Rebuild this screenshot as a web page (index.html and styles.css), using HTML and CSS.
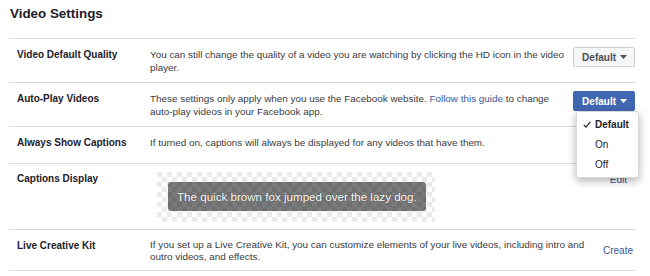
FILE: index.html
```html
<!DOCTYPE html>
<html lang="en">
<head>
    <meta charset="UTF-8">
    <meta name="viewport" content="width=device-width, initial-scale=1.0">
    <title>Video Settings</title>
    <link rel="stylesheet" href="styles.css">
</head>
<body>
    <div class="page">
        <h2 class="title">Video Settings</h2>

        <div class="settings">
            <div class="row">
                <div class="label">Video Default Quality</div>
                <div class="desc">You can still change the quality of a video you are watching by clicking the HD icon in the video player.</div>
                <div class="control">
                    <button class="btn">Default <svg class="caret" width="7" height="4" viewBox="0 0 7 4"><path d="M0 0h7L3.5 4z" fill="currentColor"/></svg></button>
                </div>
            </div>

            <div class="row">
                <div class="label">Auto-Play Videos</div>
                <div class="desc">These settings only apply when you use the Facebook website. <a href="#">Follow this guide</a> to change auto-play videos in your Facebook app.</div>
                <div class="control menu-anchor">
                    <button class="btn btn-primary">Default <svg class="caret" width="7" height="4" viewBox="0 0 7 4"><path d="M0 0h7L3.5 4z" fill="currentColor"/></svg></button>
                    <ul class="menu">
                        <li class="menu-item selected">
                            <span class="check"><svg width="8" height="7" viewBox="0 0 8 7"><path d="M0.8 3.8L3 6.1L7.2 0.8" fill="none" stroke="#1d2129" stroke-width="1.2"/></svg></span>Default
                        </li>
                        <li class="menu-item"><span class="check"></span>On</li>
                        <li class="menu-item"><span class="check"></span>Off</li>
                    </ul>
                </div>
            </div>

            <div class="row">
                <div class="label">Always Show Captions</div>
                <div class="desc">If turned on, captions will always be displayed for any videos that have them.</div>
                <div class="control"></div>
            </div>

            <div class="row row-preview">
                <div class="label">Captions Display</div>
                <div class="desc">
                    <div class="checker">
                        <span class="caption">The quick brown fox jumped over the lazy dog.</span>
                    </div>
                </div>
                <div class="control"><a href="#" class="edit">Edit</a></div>
            </div>

            <div class="row row-last">
                <div class="label">Live Creative Kit</div>
                <div class="desc desc-tight">If you set up a Live Creative Kit, you can customize elements of your live videos, including intro and outro videos, and effects.</div>
                <div class="control control-middle"><a href="#">Create</a></div>
            </div>
        </div>
    </div>
</body>
</html>
```

FILE: styles.css
```css
body {
    margin: 0;
    background-color: #ffffff;
    font-family: "Liberation Sans", Arial, sans-serif;
    color: #1d2129;
}
.page {
    padding: 6px 14px 0 9px;
}
.title {
    margin: 0 0 16px 1px;
    font-size: 13.4px;
    line-height: 16px;
    font-weight: bold;
    color: #1d2129;
}
a {
    color: #365899;
    text-decoration: none;
}
.row {
    display: grid;
    grid-template-columns: 129px 1fr auto;
    column-gap: 4px;
    padding: 9px 1px 8px 8px;
    min-height: 19px;
    border-top: 1px solid #dadde1;
    font-size: 10px;
    line-height: 13px;
}
.row-preview {
    padding-top: 8px;
    padding-bottom: 7px;
}
.row-preview .edit {
    margin-top: 1px;
}
.row-last {
    border-bottom: 1px solid #dadde1;
}
.label {
    font-weight: bold;
    color: #1d2129;
}
.desc {
    color: #383b41;
    font-size: 9.9px;
}
.desc-tight {
    line-height: 11.5px;
}
.control {
    display: flex;
    justify-content: flex-end;
    align-items: flex-start;
}
.control-middle {
    align-self: center;
    padding-right: 2px;
}
.menu-anchor {
    position: relative;
}
.btn {
    display: flex;
    align-items: center;
    gap: 4px;
    height: 20px;
    margin-top: -1px;
    padding: 0 7px 0 8px;
    border: 1px solid #ccd0d5;
    border-radius: 2px;
    background-color: #f5f6f7;
    color: #4b4f56;
    font-family: inherit;
    font-size: 10px;
    font-weight: bold;
    cursor: pointer;
}
.btn-primary {
    background-color: #4267b2;
    border-color: #4267b2;
    color: #ffffff;
}
.caret {
    display: block;
}
.menu {
    position: absolute;
    top: 19px;
    right: -4px;
    width: 61px;
    margin: 0;
    padding: 2px 0 3px;
    list-style: none;
    background-color: #ffffff;
    border: 1px solid rgba(0, 0, 0, 0.15);
    border-radius: 3px;
    box-shadow: 0 3px 8px rgba(0, 0, 0, 0.3);
    z-index: 2;
}
.menu-item {
    display: flex;
    align-items: center;
    height: 20px;
    padding-left: 6px;
    color: #1d2129;
}
.menu-item.selected {
    font-weight: bold;
}
.check {
    display: flex;
    align-items: center;
    width: 12px;
}
.checker {
    margin-left: 7px;
    width: 278px;
    padding: 10px 10px 11px 11px;
    box-sizing: border-box;
    background: repeating-conic-gradient(#ffffff 0 25%, #e9ebee 0 50%) 0 0 / 10px 10px;
}
.caption {
    display: inline-block;
    padding: 7px 9px;
    border-radius: 3px;
    background-color: rgba(0, 0, 0, 0.52);
    color: #ffffff;
    font-size: 11.6px;
    line-height: 15px;
    text-shadow: 0 0 1px rgba(0, 0, 0, 0.6);
    white-space: nowrap;
}
.edit {
    padding-right: 8px;
}
```
